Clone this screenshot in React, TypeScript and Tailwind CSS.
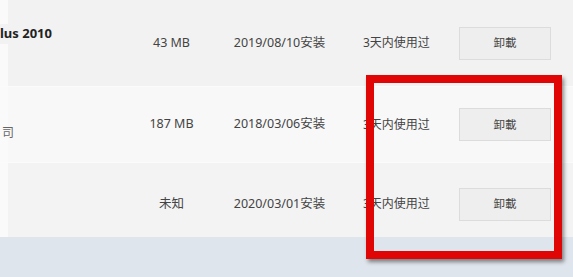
import React from 'react';

interface AppRow {
  name: string;
  bold?: boolean;
  size: string;
  date: string;
  used: string;
  bg: string;
  height: string;
  pad: string;
}

const rows: AppRow[] = [
  { name: 'lus 2010', bold: true, size: '43 MB', date: '2019/08/10安装', used: '3天内使用过', bg: 'bg-[#f2f2f2]', height: 'h-[86px]', pad: 'pt-[0px]' },
  { name: '司', size: '187 MB', date: '2018/03/06安装', used: '3天内使用过', bg: 'bg-[#f8f8f8]', height: 'h-[76px]', pad: 'pt-[0px]' },
  { name: '', size: '未知', date: '2020/03/01安装', used: '3天内使用过', bg: 'bg-[#f3f3f3]', height: 'h-[75px]', pad: 'pt-[8px]' },
];

const Row: React.FC<{ row: AppRow; index: number }> = ({ row, index }) => (
  <div className={`relative flex items-center ${row.height} ${row.bg} ${row.pad} ${index > 0 ? 'border-t border-[#fbfbfb]' : ''}`}>
    {/* lighter strip on the left edge */}
    <div className="absolute left-0 top-0 bottom-0 w-[8px] bg-[#fafafa]" />
    <div className={`relative w-[140px] self-stretch flex ${index === 0 ? 'items-start pt-[24px]' : 'items-center pt-[16px]'}`}>
      <span className={row.bold ? `text-[13px] font-bold text-[#222] ${row.bg}` : 'text-[12px] text-[#666] pl-[2px]'}>{row.name}</span>
    </div>
    <div className="w-[63px] text-center text-[12.5px] text-[#444]">{row.size}</div>
    <div className="w-[153px] text-center text-[12.5px] text-[#444]">{row.date}</div>
    <div className="w-[103px] pl-[7px] text-[12px] text-[#444]">{row.used}</div>
    <button className="w-[92px] h-[33px] bg-[#eeeeee] border border-[#dcdcdc] text-[11.5px] text-[#444]">卸載</button>
  </div>
);

export default function App() {
  return (
    <div
      className="relative w-[573px] h-[277px] overflow-hidden bg-[#dfe5ec]"
      style={{ fontFamily: '"Noto Sans", "Noto Sans CJK SC", sans-serif' }}
    >
      <div className="flex flex-col h-[237px]">
        {rows.map((r, i) => (
          <Row key={i} row={r} index={i} />
        ))}
      </div>
      <div className="absolute left-[366px] top-[75px] w-[196px] h-[184px] border-[8px] border-[#e00606] shadow-[2px_3px_4px_rgba(0,0,0,0.45)]" />
    </div>
  );
}
